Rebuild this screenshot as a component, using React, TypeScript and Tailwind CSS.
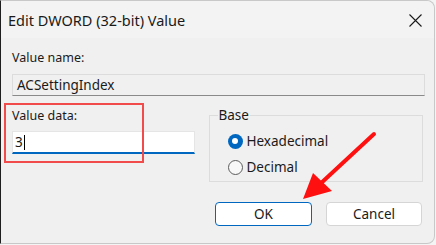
import React from 'react';

const font = { fontFamily: '"Noto Sans", "Open Sans", sans-serif' };

export default function App() {
  return (
    <div className="w-[436px] h-[245px] bg-[#f4f4f4] overflow-hidden" style={font}>
      <div className="relative w-[435px] h-[244px] bg-[#f0f0f0] rounded-tr-[8px] rounded-br-[8px] border-l border-l-[#1e1e1e] border-r border-b border-t border-[#c8c8c8] text-[#1a1a1a]">
        {/* Title bar */}
        <div className="h-[37px] bg-[#f3f3f3] rounded-tr-[8px] flex items-center justify-between pl-[7px] pr-[12px]">
          <span className="text-[14.5px] leading-[20px] text-[#1a1a1a]">Edit DWORD (32-bit) Value</span>
          <svg width="13" height="13" viewBox="0 0 13 13" className="mt-[1px]">
            <path d="M0.5 0.5 L12.5 12.5 M12.5 0.5 L0.5 12.5" stroke="#1a1a1a" strokeWidth="1.1" />
          </svg>
        </div>

        {/* Body */}
        <div className="px-[11px] text-[12.5px] leading-[16px]">
          <div className="pt-[12px]">Value name:</div>
          <div className="mt-[8px] h-[22px] w-[413px] border border-[#dcdcdc] border-b-[#8a8a8a] bg-[#f0f0f0] px-[4px] flex items-center text-[13.5px]">
            ACSettingIndex
          </div>

          <div className="mt-[12px] flex gap-[14px]">
            <div className="w-[184px]">
              <div>Value data:</div>
              <div className="mt-[7px] h-[23px] bg-white border border-[#e5e5e5] border-b-2 border-b-[#0067c0] px-[2px] flex items-center text-[13.5px]">
                <span>3</span>
                <span className="ml-[1px] w-[1px] h-[15px] bg-black" />
              </div>
            </div>

            <fieldset className="w-[216px] h-[75px] -mt-[1px] border border-[#dcdcdc] pl-[18px] pr-[8px]">
              <legend className="px-[1px] ml-[-10px] text-[13.5px] leading-[16px]">Base</legend>
              <div className="flex items-center gap-[4px] mt-[10px] text-[13.5px]">
                <span className="w-[15px] h-[15px] rounded-full bg-[#0067c0] flex items-center justify-center">
                  <span className="w-[6px] h-[6px] rounded-full bg-white" />
                </span>
                <span>Hexadecimal</span>
              </div>
              <div className="flex items-center gap-[4px] mt-[10px] text-[13.5px]">
                <span className="w-[15px] h-[15px] rounded-full bg-[#f8f8f8] border border-[#5c5c5c]" />
                <span>Decimal</span>
              </div>
            </fieldset>
          </div>

          <div className="mt-[20px] flex justify-end gap-[14px] pr-[1px] text-[13.5px]">
            <button className="w-[97px] h-[24px] bg-white border border-[#0067c0] rounded-[4px]">OK</button>
            <button className="w-[96px] h-[24px] bg-white border border-[#d5d5d5] rounded-[4px]">Cancel</button>
          </div>
        </div>

        {/* Annotations */}
        <div className="absolute left-[3px] top-[102px] w-[140px] h-[60px] border-2 border-[#f24b4b]" />
        <svg className="absolute left-0 top-0" width="436" height="245" viewBox="0 0 436 245">
          <line x1="373" y1="133" x2="318" y2="184" stroke="#ff1010" strokeWidth="4" strokeLinecap="round" />
          <polygon points="302,198 312,172 331,190" fill="#ff1010" />
        </svg>
      </div>
    </div>
  );
}
